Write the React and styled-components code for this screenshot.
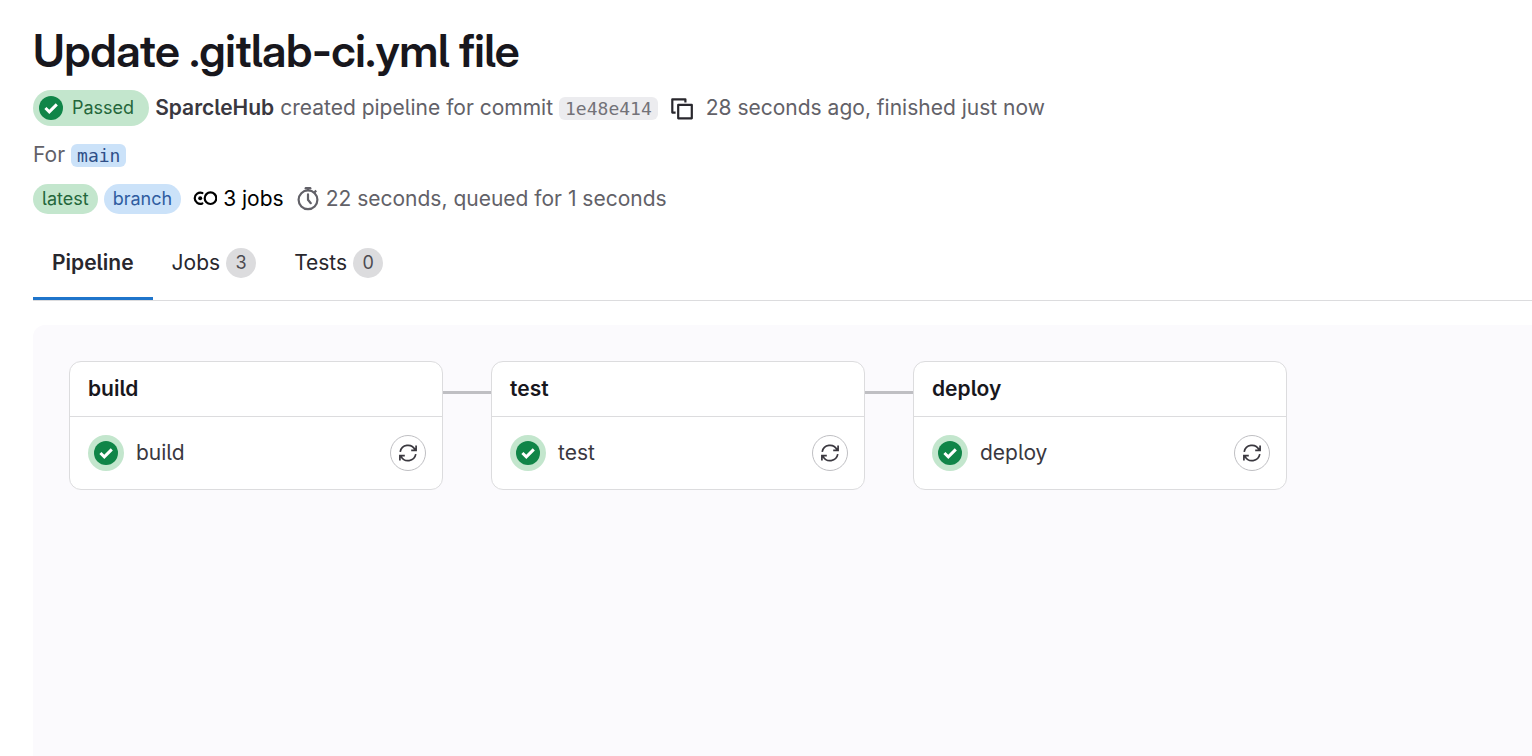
import React from "react";
import styled, { createGlobalStyle } from "styled-components";

const GlobalStyle = createGlobalStyle`
  *, *::before, *::after { box-sizing: border-box; }
  body {
    margin: 0;
    background: #fff;
    color: #3a383f;
    font-family: Inter, "Liberation Sans", sans-serif;
    font-size: 21px;
    line-height: 30px;
    font-feature-settings: "cv05";
  }
  a { color: inherit; text-decoration: none; }
  button { font: inherit; padding: 0; cursor: pointer; }
`;

const Page = styled.main`
  display: flex;
  flex-direction: column;
  min-height: 100vh;
  padding: 24px 0 0 33px;
`;

const Title = styled.h1`
  margin: 0;
  color: #18171d;
  font-family: "Inter Display", Inter, "Liberation Sans", sans-serif;
  font-size: 45px;
  line-height: 54px;
  font-weight: 600;
  letter-spacing: -0.01em;
`;

const MetaRow = styled.div`
  display: flex;
  flex-wrap: wrap;
  align-items: center;
  gap: 6px;
  min-height: ${(p) => p.$height}px;
  margin-top: ${(p) => p.$top}px;
  color: #626168;
`;

const Author = styled.a`
  color: #3a383f;
  font-weight: 600;
`;

const StatusPill = styled.a`
  display: inline-flex;
  align-items: center;
  gap: 9px;
  height: 36px;
  padding: 0 15px 0 6px;
  border-radius: 18px;
  background: #c3e6cd;
  color: #24663b;
  font-size: 18px;
`;

const tones = {
  success: { background: "#c3e6cd", color: "#24663b" },
  info: { background: "#cbe2f9", color: "#2f5ca0" },
  neutral: { background: "#dcdcde", color: "#4c4b51" },
};

const Badge = styled.span`
  display: inline-flex;
  align-items: center;
  justify-content: center;
  min-width: 30px;
  height: 30px;
  padding: 0 9px;
  border-radius: 15px;
  background: ${(p) => tones[p.$tone].background};
  color: ${(p) => tones[p.$tone].color};
  font-size: 18px;
  font-weight: 400;
`;

const Code = styled.a`
  padding: 0 6px;
  border-radius: 6px;
  background: ${(p) => (p.$info ? "#cbe2f9" : "#ececef")};
  color: ${(p) => (p.$info ? "#2f4f88" : "#737278")};
  font-family: "DejaVu Sans Mono", "Liberation Mono", monospace;
  font-size: 18px;
  line-height: 23px;
`;

const CopyButton = styled.button`
  display: grid;
  place-items: center;
  width: 36px;
  height: 36px;
  border: 0;
  background: none;
  color: #28272d;
`;

const Stat = styled.span`
  display: inline-flex;
  align-items: center;
  gap: 6px;
  margin-left: 6px;
  color: ${(p) => (p.$dark ? "#000" : "#626168")};
`;

const Tabs = styled.nav`
  display: flex;
  margin-top: 12px;
  border-bottom: 1px solid #dcdcde;
`;

const Tab = styled.a`
  display: flex;
  align-items: center;
  gap: 6px;
  height: 74px;
  padding: 0 19px;
  box-shadow: ${(p) => (p.$active ? "inset 0 -3px #1f75cb" : "none")};
  color: #28272d;
  font-weight: ${(p) => (p.$active ? 600 : 400)};
`;

const Graph = styled.section`
  display: flex;
  flex: 1;
  align-items: flex-start;
  margin-top: 24px;
  padding: 36px;
  border-radius: 12px 0 0 0;
  background: #fbfafd;
`;

const Connector = styled.div`
  flex: 0 1 48px;
  height: 3px;
  margin-top: 30px;
  background: #bfbfc3;
`;

const Stage = styled.article`
  flex: 0 1 374px;
  border: 1px solid #dcdcde;
  border-radius: 12px;
  background: #fff;
`;

const StageName = styled.h2`
  margin: 0;
  padding: 12px 18px;
  border-bottom: 1px solid #dcdcde;
  color: #18171d;
  font-size: 21px;
  line-height: 30px;
  font-weight: 600;
`;

const Job = styled.div`
  display: flex;
  align-items: center;
  justify-content: space-between;
  height: 72px;
  padding: 0 16px 0 18px;
`;

const JobLink = styled.a`
  display: flex;
  align-items: center;
  gap: 12px;
`;

const StatusRing = styled.span`
  display: grid;
  place-items: center;
  width: 36px;
  height: 36px;
  border-radius: 50%;
  background: #c3e6cd;
`;

const RetryButton = styled.button`
  display: grid;
  place-items: center;
  width: 36px;
  height: 36px;
  border: 1px solid #bfbfc3;
  border-radius: 50%;
  background: #fff;
  color: #3a383f;
`;

const CheckIcon = () => (
  <svg width="24" height="24" viewBox="0 0 24 24" aria-hidden="true">
    <circle cx="12" cy="12" r="12" fill="#108548" />
    <path d="M6.4 12 L10.3 15.8 L17.8 8.4" fill="none" stroke="#fff" strokeWidth="3" />
  </svg>
);

const CopyIcon = () => (
  <svg width="24" height="24" viewBox="0 0 24 24" fill="none" stroke="currentColor" strokeWidth="2.2" strokeLinejoin="round" aria-hidden="true">
    <path d="M5.6 16.6 H2.3 V3.3 H15.4 V6.4" />
    <rect x="8.2" y="8.9" width="13.6" height="13.4" />
  </svg>
);

const PipelineIcon = () => (
  <svg width="24" height="24" viewBox="0 0 24 24" fill="none" stroke="currentColor" strokeWidth="2.2" aria-hidden="true">
    <circle cx="17.5" cy="11.2" r="5.8" />
    <path d="M9.4 6 A5.6 5.6 0 1 0 9.4 16.4" strokeLinecap="round" />
    <circle cx="7.2" cy="11.2" r="2" fill="currentColor" stroke="none" />
  </svg>
);

const TimerIcon = () => (
  <svg width="24" height="24" viewBox="0 0 24 24" fill="none" stroke="currentColor" strokeWidth="2.2" aria-hidden="true">
    <circle cx="12" cy="12.8" r="9.4" />
    <path d="M9.8 1.2 H14.2" strokeWidth="2.4" strokeLinecap="round" />
    <path d="M12 1.5 V4 M18.2 5.8 L20.2 3.5" />
    <path d="M12 7.4 V12.8 L14.8 16.2" strokeLinecap="round" />
  </svg>
);

const RetryIcon = () => (
  <svg width="18" height="18" viewBox="0 0 18 18" fill="none" stroke="currentColor" strokeWidth="1.7" aria-hidden="true">
    <path d="M1.2 7.8 A7.9 7.9 0 0 1 16 5.7 M12.2 6.3 H17.1 V1.4" />
    <path d="M16.8 10.2 A7.9 7.9 0 0 1 2 12.3 M5.8 11.7 H0.9 V16.6" />
  </svg>
);

const stages = ["build", "test", "deploy"];

const tabs = [
  { label: "Pipeline", active: true },
  { label: "Jobs", count: 3 },
  { label: "Tests", count: 0 },
];

export default function App() {
  return (
    <>
      <GlobalStyle />
      <Page>
        <Title>Update .gitlab-ci.yml file</Title>
        <MetaRow $top={12} $height={36}>
          <StatusPill href="#status">
            <CheckIcon />
            Passed
          </StatusPill>
          <Author href="#author">SparcleHub</Author>
          <span>created pipeline for commit</span>
          <Code href="#commit">1e48e414</Code>
          <CopyButton aria-label="Copy commit SHA">
            <CopyIcon />
          </CopyButton>
          <span>28 seconds ago, finished just now</span>
        </MetaRow>
        <MetaRow $top={14} $height={30}>
          <span>For</span>
          <Code $info href="#main">main</Code>
        </MetaRow>
        <MetaRow $top={14} $height={30}>
          <Badge $tone="success">latest</Badge>
          <Badge $tone="info">branch</Badge>
          <Stat $dark>
            <PipelineIcon />
            3 jobs
          </Stat>
          <Stat>
            <TimerIcon />
            22 seconds, queued for 1 seconds
          </Stat>
        </MetaRow>
        <Tabs aria-label="Pipeline views">
          {tabs.map(({ label, count, active }) => (
            <Tab key={label} href={`#${label.toLowerCase()}`} $active={active} aria-current={active ? "page" : undefined}>
              {label}
              {count !== undefined && <Badge $tone="neutral">{count}</Badge>}
            </Tab>
          ))}
        </Tabs>
        <Graph aria-label="Pipeline graph">
          {stages.map((name, index) => (
            <React.Fragment key={name}>
              {index > 0 && <Connector />}
              <Stage>
                <StageName>{name}</StageName>
                <Job>
                  <JobLink href={`#job-${name}`}>
                    <StatusRing>
                      <CheckIcon />
                    </StatusRing>
                    {name}
                  </JobLink>
                  <RetryButton aria-label={`Run ${name} again`}>
                    <RetryIcon />
                  </RetryButton>
                </Job>
              </Stage>
            </React.Fragment>
          ))}
        </Graph>
      </Page>
    </>
  );
}
